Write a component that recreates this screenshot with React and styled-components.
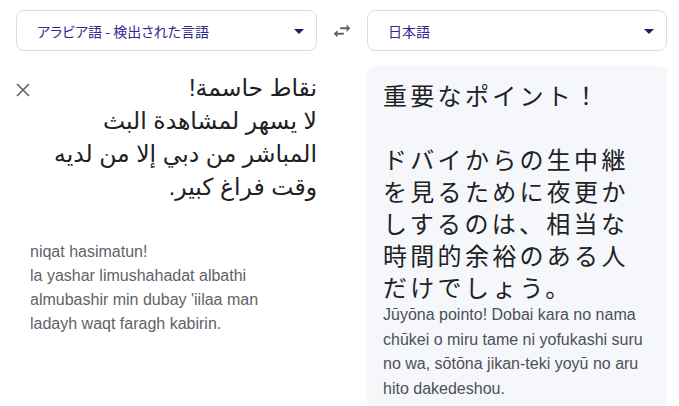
import React from 'react';
import styled, { createGlobalStyle } from 'styled-components';

const Global = createGlobalStyle`
  html, body { margin: 0; padding: 0; background: #ffffff; overflow: hidden; }
  body { font-family: "Liberation Sans", Arial, sans-serif; }
`;

const Page = styled.div`
  padding: 10px 12px 0 16px;
  display: flex;
  flex-direction: column;
  gap: 15px;
`;

const Row = styled.div`
  display: grid;
  grid-template-columns: 301px 50px 300px;
  align-items: ${(p) => (p.$top ? 'start' : 'center')};
`;

const Select = styled.div`
  height: 41px;
  box-sizing: border-box;
  border: 1px solid #dadce0;
  border-radius: 8px;
  background: #fff;
  display: flex;
  align-items: center;
  justify-content: space-between;
  padding: 0 12px 0 20px;
  font-family: "Noto Sans CJK JP", sans-serif;
  font-size: 14px;
  color: #2d2b8c;
  font-feature-settings: "palt";
`;

const Caret = styled.span`
  width: 0;
  height: 0;
  border-left: 5px solid transparent;
  border-right: 5px solid transparent;
  border-top: 5px solid #1f1a6b;
  margin-top: 2px;
`;

const IconButton = styled.button`
  border: 0;
  background: transparent;
  padding: 0;
  display: flex;
  align-items: center;
  justify-content: center;
  justify-self: ${(p) => p.$justify || 'auto'};
  color: #5f6368;
  margin-top: ${(p) => p.$mt || 0}px;
`;

const SourceColumn = styled.div`
  display: flex;
  flex-direction: column;
`;

const SourceTop = styled.div`
  display: flex;
  justify-content: space-between;
  align-items: flex-start;
`;

const ArabicText = styled.div`
  direction: rtl;
  text-align: right;
  font-family: Arial, "DejaVu Sans", sans-serif;
  font-size: 23.5px;
  line-height: 33px;
  color: #202124;
  padding-top: 6px;
  white-space: nowrap;
`;

const TranslitClip = styled.div`
  margin: 36px 0 0 15px;
  overflow: hidden;
`;

const Translit = styled.div`
  margin-left: -1px;
  font-size: 16px;
  line-height: 24px;
  color: #5f6368;
  white-space: nowrap;
`;

const TargetPanel = styled.div`
  background: #f5f7fa;
  border-radius: 8px;
  padding: 13px 16px 8px 16px;
`;

const JapaneseText = styled.div`
  font-family: "Noto Sans CJK JP", sans-serif;
  font-size: 24px;
  letter-spacing: 3.3px;
  line-height: 32px;
  color: #202124;
  white-space: nowrap;
`;

const Romaji = styled.div`
  font-size: 16px;
  line-height: 24.5px;
  color: #4d5156;
  white-space: nowrap;
`;

const SwapIcon = () => (
  <svg width="22" height="22" viewBox="0 0 24 24" fill="currentColor">
    <path d="M6.99 11L3 15l3.99 4v-3H14v-2H6.99v-3zM21 9l-3.99-4v3H10v2h7.01v3L21 9z" />
  </svg>
);

const CloseIcon = () => (
  <svg width="14" height="14" viewBox="0 0 14 14" stroke="currentColor" strokeWidth="1.6" fill="none">
    <path d="M1 1L13 13M13 1L1 13" />
  </svg>
);

export default function App() {
  return (
    <>
      <Global />
      <Page>
        <Row>
          <Select>
            <span>アラビア語 - 検出された言語</span>
            <Caret />
          </Select>
          <IconButton $justify="center" aria-label="swap">
            <SwapIcon />
          </IconButton>
          <Select>
            <span>日本語</span>
            <Caret />
          </Select>
        </Row>
        <Row $top>
          <SourceColumn>
            <SourceTop>
              <IconButton $mt={17} aria-label="clear">
                <CloseIcon />
              </IconButton>
              <ArabicText>
                نقاط حاسمة!
                <br />
                لا يسهر لمشاهدة البث
                <br />
                المباشر من دبي إلا من لديه
                <br />
                وقت فراغ كبير.
              </ArabicText>
            </SourceTop>
            <TranslitClip>
              <Translit>
                niqat hasimatun!
                <br />
                la yashar limushahadat albathi
                <br />
                almubashir min dubay 'iilaa man
                <br />
                ladayh waqt faragh kabirin.
              </Translit>
            </TranslitClip>
          </SourceColumn>
          <div />
          <TargetPanel>
            <JapaneseText>
              重要なポイント！
              <br />
              <br />
              ドバイからの生中継
              <br />
              を見るために夜更か
              <br />
              しするのは、相当な
              <br />
              時間的余裕のある人
              <br />
              だけでしょう。
            </JapaneseText>
            <Romaji>
              Jūyōna pointo! Dobai kara no nama
              <br />
              chūkei o miru tame ni yofukashi suru
              <br />
              no wa, sōtōna jikan-teki yoyū no aru
              <br />
              hito dakedeshou.
            </Romaji>
          </TargetPanel>
        </Row>
      </Page>
    </>
  );
}
